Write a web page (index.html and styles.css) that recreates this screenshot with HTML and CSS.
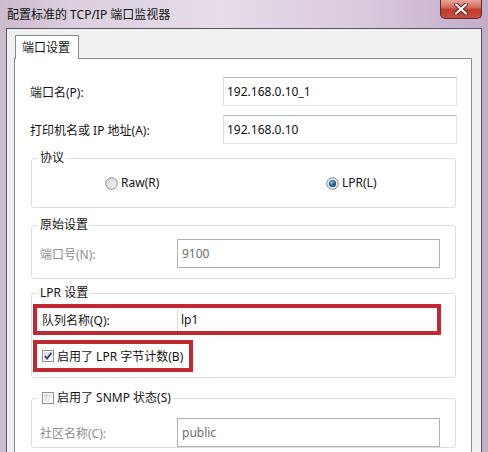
FILE: index.html
```html
<!DOCTYPE html>
<html lang="zh-CN">
  <head>
    <meta charset="UTF-8" />
    <title>配置标准的 TCP/IP 端口监视器</title>
    <link rel="stylesheet" href="styles.css">
  </head>
  <body>
    <div class="window">
      <div class="titlebar">
        <span class="title">配置标准的 TCP/IP 端口监视器</span>
        <div class="close">
          <svg width="16" height="12" viewBox="0 0 16 12">
            <path d="M3 1.5 L13 10.5 M13 1.5 L3 10.5" stroke="#5b2320" stroke-width="4" stroke-linecap="round" />
            <path d="M3 1.5 L13 10.5 M13 1.5 L3 10.5" stroke="#ffffff" stroke-width="2.2" stroke-linecap="round" />
          </svg>
        </div>
      </div>

      <div class="client">
        <div class="tabs">
          <div class="tab">端口设置</div>
        </div>

        <div class="panel">
          <div class="row">
            <label class="label-wide">端口名(P):</label>
            <input class="field" type="text" value="192.168.0.10_1" />
          </div>
          <div class="row row-next">
            <label class="label-wide">打印机名或 IP 地址(A):</label>
            <input class="field" type="text" value="192.168.0.10" />
          </div>

          <!-- 协议 -->
          <fieldset class="group proto">
            <legend>协议</legend>
            <div class="radios">
              <span class="opt opt-raw">
                <svg class="radio" width="13" height="13" viewBox="0 0 13 13">
                  <defs>
                    <linearGradient id="rg" x1="0" y1="0" x2="1" y2="1">
                      <stop offset="0" stop-color="#cfcfcf" />
                      <stop offset="1" stop-color="#fbfbfb" />
                    </linearGradient>
                  </defs>
                  <circle cx="6.5" cy="6.5" r="5.8" fill="url(#rg)" stroke="#8b8b8b" />
                </svg>
                Raw(R)
              </span>
              <span class="opt">
                <svg class="radio" width="13" height="13" viewBox="0 0 13 13">
                  <defs>
                    <radialGradient id="dot" cx="0.4" cy="0.35" r="0.7">
                      <stop offset="0" stop-color="#8fc3ea" />
                      <stop offset="0.5" stop-color="#2c6aa5" />
                      <stop offset="1" stop-color="#1a3f6b" />
                    </radialGradient>
                  </defs>
                  <circle cx="6.5" cy="6.5" r="5.8" fill="#e9ecef" stroke="#8b8b8b" />
                  <circle cx="6.5" cy="6.5" r="3.6" fill="url(#dot)" />
                </svg>
                LPR(L)
              </span>
            </div>
          </fieldset>

          <!-- 原始设置 -->
          <fieldset class="group raw">
            <legend>原始设置</legend>
            <div class="row inner-row">
              <label class="label-narrow muted">端口号(N):</label>
              <input class="field off" type="text" value="9100" readonly />
            </div>
          </fieldset>

          <!-- LPR 设置 -->
          <fieldset class="group lpr">
            <legend>LPR 设置</legend>
            <div class="mark mark-queue">
              <label class="label-mark">队列名称(Q):</label>
              <input class="field in-mark" type="text" value="lp1" />
            </div>
            <div class="mark mark-count">
              <svg class="check" width="12" height="12" viewBox="0 0 12 12">
                <defs>
                  <linearGradient id="cg" x1="0" y1="0" x2="1" y2="1">
                    <stop offset="0" stop-color="#d4d7da" />
                    <stop offset="1" stop-color="#fbfbfb" />
                  </linearGradient>
                </defs>
                <rect x="0.5" y="0.5" width="11" height="11" fill="#fff" stroke="#8e8f8f" />
                <rect x="2" y="2" width="8" height="8" fill="url(#cg)" />
                <path d="M2.8 6 L5 8.6 L9.4 2.8" fill="none" stroke="#2b3f74" stroke-width="1.7" />
              </svg>
              <span>启用了 LPR 字节计数(B)</span>
            </div>
          </fieldset>

          <!-- SNMP -->
          <fieldset class="group snmp">
            <legend class="legend-check">
              <svg class="check" width="12" height="12" viewBox="0 0 12 12">
                <rect x="0.5" y="0.5" width="11" height="11" fill="#fff" stroke="#8e8f8f" />
                <rect x="2" y="2" width="8" height="8" fill="url(#cg)" />
              </svg>
              <span>启用了 SNMP 状态(S)</span>
            </legend>
            <div class="row inner-row">
              <label class="label-narrow muted">社区名称(C):</label>
              <input class="field off" type="text" value="public" readonly />
            </div>
          </fieldset>
        </div>
      </div>
    </div>
  </body>
</html>
```

FILE: styles.css
```css
body {
  margin: 0;
  width: 488px;
  height: 452px;
  overflow: hidden;
  font-family: "Noto Sans", "Noto Sans CJK SC", sans-serif;
  font-size: 12px;
  color: #151515;
}

.window {
  box-sizing: border-box;
  height: 452px;
  display: flex;
  flex-direction: column;
  padding: 0 6px;
  background: linear-gradient(to right, #cbbccd 0%, #dccfdf 15%, #e6dde8 45%, #d9c9dd 75%, #c3acca 100%);
}

.titlebar {
  height: 28px;
  flex-shrink: 0;
  display: flex;
  justify-content: space-between;
  align-items: flex-start;
}

.title {
  padding: 7px 0 0 1px;
  line-height: 16px;
  color: #111;
}

.close {
  box-sizing: border-box;
  width: 42px;
  height: 19px;
  border: 1px solid #5e2b2b;
  border-top: 0;
  border-radius: 0 0 5px 5px;
  background: linear-gradient(#e9a699 0%, #d76c5e 40%, #bd3a2c 55%, #c8513f 100%);
  display: flex;
  align-items: center;
  justify-content: center;
}

.client {
  flex: 1;
  background: #f0f0f0;
  border: 1px solid #57525b;
  border-bottom: 0;
  padding: 6px 9px 0 7px;
  overflow: hidden;
}

.tabs {
  display: flex;
}

.tab {
  position: relative;
  z-index: 1;
  margin: 0 0 -1px 1px;
  height: 23px;
  line-height: 23px;
  padding: 0 8px 0 6px;
  border: 1px solid #898c95;
  border-bottom: 0;
  background: #fff;
}

.panel {
  height: 400px;
  background: #fff;
  border: 1px solid #898c95;
  padding: 18px 14px 0 15px;
}

.row {
  display: flex;
  align-items: center;
  height: 29px;
}

.row-next {
  margin-top: 9px;
}

.label-wide {
  width: 193px;
  flex-shrink: 0;
}

.label-narrow {
  width: 137px;
  flex-shrink: 0;
}

.inner-row {
  padding-left: 2px;
}

.muted {
  color: #8d8d8d;
}

.field {
  flex: 1;
  min-width: 0;
  box-sizing: border-box;
  height: 29px;
  margin: 0;
  padding: 0 3px;
  font: inherit;
  color: #111;
  background: #fff;
  border: 1px solid;
  border-color: #b5b8be #dfe3e8 #e3e8ed #d9dde2;
  outline: none;
}

.field.off {
  color: #6d6d6d;
  border-color: #adb2b5;
  padding-left: 4px;
}

.group {
  margin: 9px 1px 0;
  padding: 0 15px 0 6px;
  border: 1px solid #d5dfe5;
  border-radius: 3px;
  min-width: 0;
}

.group legend {
  padding: 0 2px;
  line-height: 16px;
}

.proto {
  margin-top: 6px;
}

.radios {
  display: flex;
  padding: 9px 0 16px 67px;
  line-height: 16px;
}

.opt {
  display: flex;
  align-items: center;
  gap: 3px;
}

.opt-raw {
  width: 221px;
}

.raw .inner-row {
  margin-top: 6px;
  margin-bottom: 10px;
}

.lpr {
  margin-top: 6px;
  padding-top: 3px;
  padding-bottom: 5px;
}

.mark {
  box-sizing: border-box;
  display: flex;
  align-items: center;
  border: 4px solid #c1272f;
  padding-left: 5px;
  margin-left: -5px;
}

.mark-queue {
  height: 31px;
  margin-right: -1px;
}

.label-mark {
  width: 135px;
  flex-shrink: 0;
}

.field.in-mark {
  height: 23px;
  border-width: 0 0 0 1px;
  border-color: #d9dde2;
}

.mark-count {
  width: 160px;
  height: 32px;
  margin-top: 5px;
  gap: 3px;
}

.check {
  flex-shrink: 0;
}

.snmp {
  margin-top: 12px;
}

.legend-check {
  display: flex;
  align-items: center;
  gap: 3px;
}

.legend-check .check {
  margin-left: 2px;
}

.snmp .inner-row {
  margin-top: 12px;
}
```
